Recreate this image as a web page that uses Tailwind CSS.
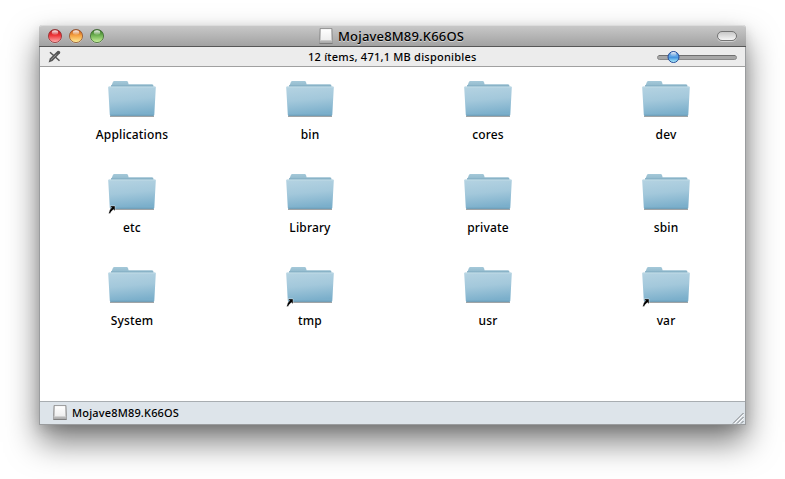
<!DOCTYPE html>
<html lang="es">
<head>
<meta charset="utf-8">
<title>Mojave8M89.K66OS</title>
<script src="https://cdn.jsdelivr.net/npm/@tailwindcss/browser@4"></script>
</head>
<body class="w-[785px] h-[479px] overflow-hidden bg-white text-black font-['Noto_Sans','Open_Sans',sans-serif] pt-[25px] pl-[39px]">
<svg width="0" height="0" class="absolute">
  <defs>
    <linearGradient id="front" x1="0" y1="0" x2="0.15" y2="1"><stop offset="0" stop-color="#b5d3e2"/><stop offset=".5" stop-color="#a3c8db"/><stop offset="1" stop-color="#7bafcb"/></linearGradient>
    <linearGradient id="back" x1="0" y1="0" x2="0" y2="1"><stop offset="0" stop-color="#a5c9d9"/><stop offset="1" stop-color="#82adc3"/></linearGradient>
    <linearGradient id="disk" x1="0" y1="0" x2="0" y2="1"><stop offset="0" stop-color="#ffffff"/><stop offset="1" stop-color="#eeeeee"/></linearGradient>
    <symbol id="folder" viewBox="0 0 48 38">
      <path d="M2 35.800h44v1.200H2z" fill="#6d7377" opacity=".65"/>
      <path d="M3 8V5.500Q4 5 4.500 3L5 1.800Q5.300 1 6.500 1H18.500Q19.700 1 20 2L20.600 4.200H44Q45.500 4.200 45.500 6V10H3z" fill="url(#back)"/>
      <path d="M3 5.900H45" stroke="#7fa9be" stroke-width=".8"/>
      <path d="M.2 7.500Q.1 6.600 1 6.600H47Q47.900 6.600 47.800 7.500L46.300 34.800Q46.200 35.800 45.200 35.800H2.800Q1.900 35.800 1.800 34.800z" fill="url(#front)"/>
      <path d="M1 7.100H47" stroke="#c3dce7" stroke-width=".7"/>
      <path d="M2.300 35.300H45.700" stroke="#6495b0" stroke-width=".9"/>
    </symbol>
    <symbol id="alias" viewBox="0 0 8 9"><path d="M2 .9H7V5.900L5.500 4.500Q3.200 6 2.100 8.600H.6Q.8 5.300 3.600 2.600z" fill="#000" stroke="#fff" stroke-width=".4"/></symbol>
    <symbol id="drive" viewBox="0 0 14 16">
      <path d="M1 .5H13L13.600 12.500V15.500H.4V12.500z" fill="#c9c9c9" stroke="#8d8d8d" stroke-width=".8"/>
      <path d="M2 1.200H12V12H2z" fill="url(#disk)"/>
      <path d="M.8 13H13.200V15H.8z" fill="#b3b3b3"/><path d="M.6 15.400H13.400" stroke="#777" stroke-width=".9"/>
    </symbol>
    <linearGradient id="red" x1="0" y1="0" x2="0" y2="1"><stop offset="0" stop-color="#a91318"/><stop offset=".45" stop-color="#ee3438"/><stop offset="1" stop-color="#ffb3b3"/></linearGradient>
    <linearGradient id="amber" x1="0" y1="0" x2="0" y2="1"><stop offset="0" stop-color="#b84a12"/><stop offset=".45" stop-color="#f5a03f"/><stop offset="1" stop-color="#fff09c"/></linearGradient>
    <linearGradient id="green" x1="0" y1="0" x2="0" y2="1"><stop offset="0" stop-color="#2c6a18"/><stop offset=".45" stop-color="#6eb152"/><stop offset="1" stop-color="#cdf5a0"/></linearGradient>
    <linearGradient id="blue" x1="0" y1="0" x2="0" y2="1"><stop offset="0" stop-color="#3268b8"/><stop offset=".4" stop-color="#65a9e8"/><stop offset=".55" stop-color="#4795df"/><stop offset="1" stop-color="#b4f5ff"/></linearGradient>
    <linearGradient id="shine" x1="0" y1="0" x2="0" y2="1"><stop offset="0" stop-color="#fff" stop-opacity=".95"/><stop offset="1" stop-color="#fff" stop-opacity=".1"/></linearGradient>
  </defs>
</svg>

<main class="w-[707px] h-[400px] flex flex-col rounded-t-[4px] border-x border-b border-[#9a9c9e] bg-white shadow-[0_17px_32px_rgba(0,0,0,0.52),0_4px_12px_rgba(0,0,0,0.13)]">
  <header class="h-[22px] shrink-0 flex items-center -mx-px pl-2 pr-[9px] rounded-t-[4px] border-t border-t-[#dcdcdc] border-b border-b-[#565656] bg-linear-to-b from-[#c8c8c8] to-[#a2a2a2]">
    <div class="flex gap-[5px] w-[121px]">
      <svg class="w-4 h-4" viewBox="0 0 16 16"><circle cx="8" cy="8.600" r="7" fill="#dedede" opacity=".7"/><circle cx="8" cy="8" r="6.600" fill="url(#red)" stroke="#8b3032" stroke-width=".8"/><ellipse cx="8" cy="4.600" rx="3.200" ry="2.300" fill="url(#shine)"/></svg>
      <svg class="w-4 h-4" viewBox="0 0 16 16"><circle cx="8" cy="8.600" r="7" fill="#dedede" opacity=".7"/><circle cx="8" cy="8" r="6.600" fill="url(#amber)" stroke="#8c5130" stroke-width=".8"/><ellipse cx="8" cy="4.600" rx="3.200" ry="2.300" fill="url(#shine)"/></svg>
      <svg class="w-4 h-4" viewBox="0 0 16 16"><circle cx="8" cy="8.600" r="7" fill="#dedede" opacity=".7"/><circle cx="8" cy="8" r="6.600" fill="url(#green)" stroke="#3f6634" stroke-width=".8"/><ellipse cx="8" cy="4.600" rx="3.200" ry="2.300" fill="url(#shine)"/></svg>
    </div>
    <div class="flex-1 flex items-center pl-[151px] gap-[5px]">
      <svg class="w-[14px] h-4"><use href="#drive"/></svg>
      <h1 class="text-[13px] leading-5 font-medium tracking-[0.17px] whitespace-nowrap [text-shadow:0_1px_0_#d5d5d5]">Mojave8M89.K66OS</h1>
    </div>
    <div class="w-5 h-[10px] rounded-full border border-[#747474] bg-linear-to-b from-[#c8c8c8] to-[#f5f5f5] shadow-[0_1px_0_#d0d0d0]"></div>
  </header>

  <div class="h-5 shrink-0 flex items-center border-b border-[#a0a0a0] bg-[#ececec] px-2">
    <svg class="w-[13px] h-[13px]" viewBox="0 0 13 13"><path d="M2 2.200L11.500 10.800" stroke="#555" stroke-width="1.500"/><path d="M.6 12.400L1.800 8.500 9.500.9Q10.500.2 11.700 1.300 12.800 2.400 12 3.300L4.500 11z" fill="#555"/><path d="M3 9.800L8.500 4.400" stroke="#aaa" stroke-width=".8"/></svg>
    <p class="flex-1 pl-[247px] text-[11px] leading-4 font-medium tracking-[0.23px] whitespace-nowrap">12 ítems, 471,1 MB disponibles</p>
    <svg class="w-20 h-[14px]" viewBox="0 0 80 14"><rect x=".5" y="5.500" width="79" height="4" rx="2" fill="#a7a7a7" stroke="#898989"/><path d="M2 5.500H78" stroke="#6f6f6f"/><circle cx="16.500" cy="7" r="5.500" fill="url(#blue)" stroke="#294e99"/><ellipse cx="16.500" cy="4" rx="3" ry="2" fill="url(#shine)"/></svg>
  </div>

  <ul id="items" class="flex-1 grid grid-cols-[repeat(4,48px)] auto-rows-[93px] gap-x-[130px] pl-[68px] pt-[13px] text-[12px] leading-4 font-medium"></ul>

  <footer class="h-[23px] shrink-0 flex items-center justify-between border-t border-[#a8adb1] bg-[#dde4ea] pl-[13px]">
    <div class="flex items-center gap-[5px] pb-px">
      <svg class="w-[14px] h-[15px]" viewBox="0 0 14 16" preserveAspectRatio="none"><use href="#drive" width="14" height="16"/></svg>
      <span class="text-[11px] leading-[15px] font-medium tracking-[0.17px]">Mojave8M89.K66OS</span>
    </div>
    <svg class="w-3 h-3 self-end mr-px" viewBox="0 0 12 12" fill="none"><path d="M1 11.500L11.500 1M5 11.500L11.500 5M9 11.500L11.500 9" stroke="#777b7e"/><path d="M2.400 11.500L11.500 2.400M6.400 11.500L11.500 6.400" stroke="#fff"/></svg>
  </footer>
</main>

<script>
  const items = [['Applications'], ['bin'], ['cores'], ['dev'], ['etc', 1], ['Library'], ['private'], ['sbin'], ['System'], ['tmp', 1], ['usr'], ['var', 1]];
  document.getElementById('items').innerHTML = items.map(([name, link]) => `
    <li class="flex flex-col items-center">
      <div class="relative w-12 h-[38px]">
        <svg class="w-12 h-[38px]"><use href="#folder"/></svg>
        ${link ? '<svg class="absolute left-0 top-[32px] w-2 h-[9px]"><use href="#alias"/></svg>' : ''}
      </div>
      <span class="mt-[9px] tracking-[0.15px] whitespace-nowrap">${name}</span>
    </li>`).join('');
</script>
</body>
</html>
